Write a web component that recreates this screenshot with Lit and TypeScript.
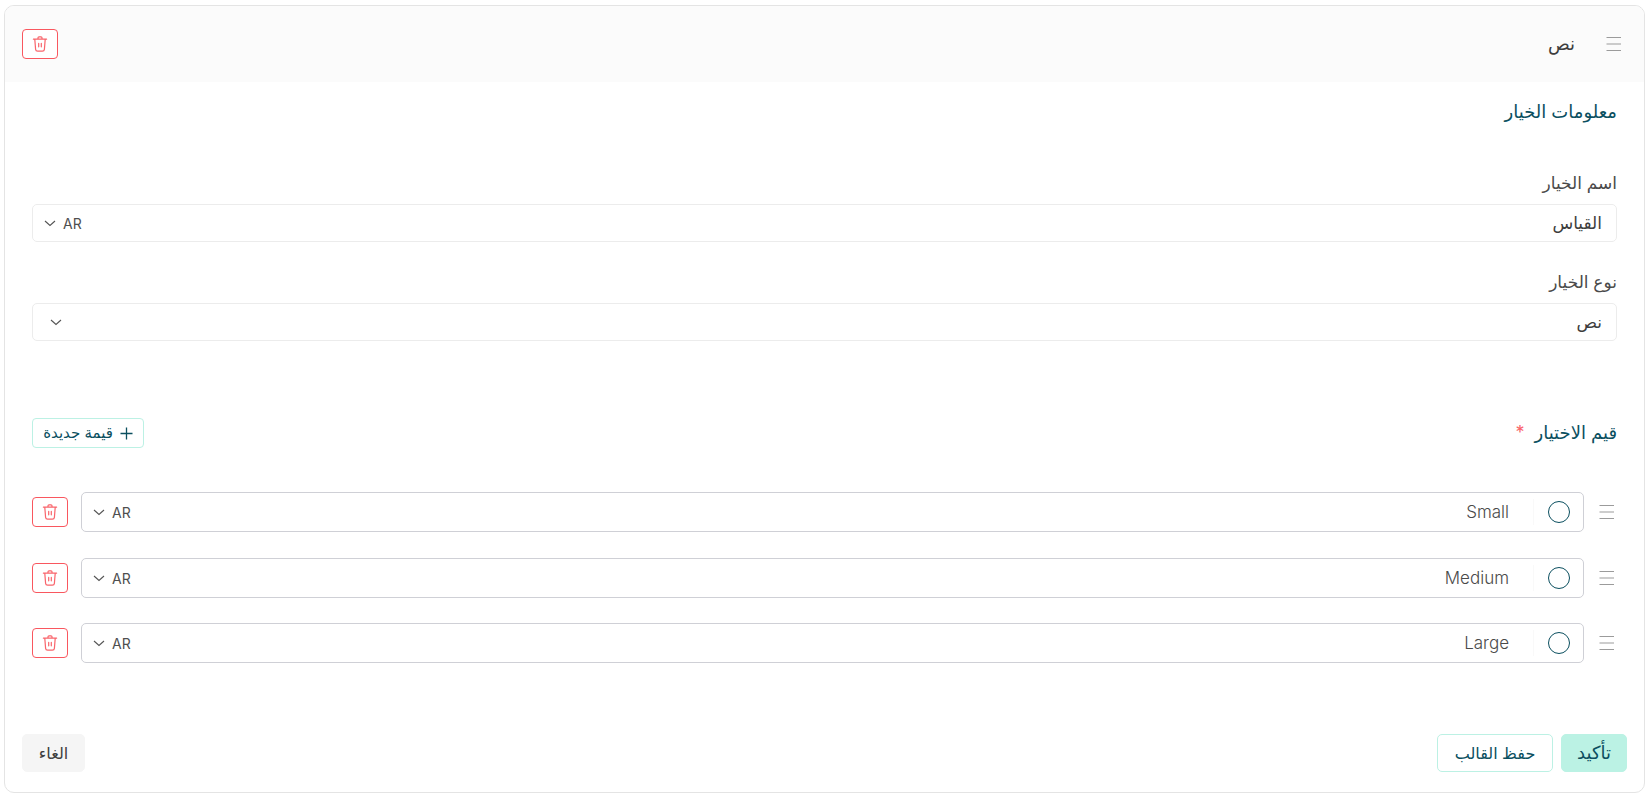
import { LitElement, html, css, svg } from 'lit';
import { customElement } from 'lit/decorators.js';

const trash = svg`<path d="M3.4 5.2h13.2M8 5V3.8c0-.6.4-1 1-1h2c.6 0 1 .4 1 1V5M4.8 5.4l.8 10c.1 1.1.9 1.8 2 1.8h4.8c1.1 0 1.9-.7 2-1.8l.8-10M8.7 9.4v3.4M11.3 9.4v3.4" />`;
const menu = svg`<path d="M.5 1.5h14.5M.5 8h14.5M.5 14.5h14.5" />`;

@customElement('app-root')
export class AppRoot extends LitElement {
  static styles = css`
    :host {
      display: block;
      height: 798px;
      padding: 5px 6px 5px 4px;
      box-sizing: border-box;
      background: #fff;
      font-family: 'Inter', 'DejaVu Sans', sans-serif;
      color: #3d3d3d;
    }
    * {
      box-sizing: border-box;
    }
    .card {
      height: 788px;
      border: 1px solid #e4e4e4;
      border-radius: 10px;
      overflow: hidden;
      display: flex;
      flex-direction: column;
    }
    .head {
      height: 76px;
      flex: none;
      background: #fbfbfb;
      display: flex;
      align-items: center;
      justify-content: space-between;
      padding: 0 22px 0 17px;
      font-size: 18px;
    }
    .head-start {
      display: flex;
      align-items: center;
      gap: 31px;
    }
    .head-text {
      margin-top: -2px;
    }
    .menu {
      width: 16px;
      height: 16px;
      flex: none;
      fill: none;
      stroke: #9b9b9b;
      stroke-width: 1.1;
    }
    .del {
      width: 36px;
      height: 30px;
      flex: none;
      border: 1px solid #f9575f;
      border-radius: 4px;
      background: #fff;
      display: flex;
      align-items: center;
      justify-content: center;
      padding: 0;
    }
    .del svg {
      width: 20px;
      height: 20px;
      fill: none;
      stroke: #f9646b;
      stroke-width: 1.2;
      stroke-linecap: round;
      stroke-linejoin: round;
    }
    .body {
      flex: 1;
      padding: 0 27px;
    }
    h2 {
      margin: 0;
      font-size: 18px;
      font-weight: 400;
      line-height: 24px;
      color: #0b4f5f;
    }
    .info-title {
      padding-top: 18px;
      margin-bottom: 48px;
    }
    .label {
      font-size: 17px;
      line-height: 22px;
      color: #4a4a4a;
      margin-bottom: 10px;
    }
    .field {
      height: 38px;
      line-height: 22px;
      border: 1px solid #ececec;
      border-radius: 5px;
      display: flex;
      align-items: center;
      justify-content: space-between;
      padding: 0 14px 0 11px;
      font-size: 17px;
      margin-bottom: 29px;
    }
    .lang {
      display: flex;
      align-items: center;
      gap: 7px;
      font-size: 14px;
      color: #4f4f4f;
    }
    .lang-text {
      padding-top: 1px;
    }
    .chev {
      width: 12px;
      height: 12px;
      flex: none;
      fill: none;
      stroke: #555;
      stroke-width: 1.1;
    }
    .type-chev {
      margin-left: 6px;
    }
    .values-head {
      display: flex;
      align-items: center;
      justify-content: space-between;
      margin-top: 77px;
      margin-bottom: 44px;
    }
    .values-title {
      display: flex;
      gap: 10px;
    }
    .star {
      color: #f9646b;
      font-size: 18px;
      line-height: 18px;
      margin-top: 3px;
    }
    .add {
      width: 112px;
      height: 30px;
      border: 1px solid #bcf1e4;
      border-radius: 4px;
      background: #fff;
      color: #0b4f5f;
      font: inherit;
      font-size: 15px;
      line-height: 20px;
      display: flex;
      align-items: center;
      justify-content: center;
      gap: 7px;
      padding: 0;
    }
    .add svg {
      width: 13px;
      height: 13px;
      flex: none;
      fill: none;
      stroke: #0b4f5f;
      stroke-width: 1.3;
    }
    .rows {
      display: flex;
      flex-direction: column;
      gap: 25.5px;
    }
    .row {
      display: flex;
      align-items: center;
      gap: 13px;
      padding-right: 2px;
    }
    .row .menu {
      margin-left: 2px;
    }
    .box {
      flex: 1;
      height: 40px;
      border: 1px solid #cfd0d6;
      border-radius: 5px;
      display: flex;
      align-items: center;
      padding: 0 13px 0 11px;
      font-size: 17px;
      color: #4a4a4a;
    }
    .dot {
      width: 22px;
      height: 22px;
      border: 1px solid #0b4f5f;
      border-radius: 50%;
      flex: none;
    }
    .sep {
      width: 1px;
      height: 26px;
      background: #f9f9f9;
      margin: 0 14px 0 24px;
    }
    .name {
      flex: 1;
      font-weight: 300;
    }
    .foot {
      flex: none;
      display: flex;
      justify-content: space-between;
      padding: 0 17px 20px;
    }
    .foot-start {
      display: flex;
      gap: 8px;
    }
    .btn {
      height: 38px;
      border: 1px solid transparent;
      border-radius: 5px;
      font: inherit;
      font-size: 16px;
      line-height: 22px;
      padding: 0;
      color: #0b4f5f;
      background: #fff;
    }
    .ok {
      width: 66px;
      font-size: 18px;
      background: #bbf2e4;
      border-color: #bbf2e4;
    }
    .tpl {
      width: 116px;
      border-color: #bcf1e4;
    }
    .cancel {
      width: 63px;
      background: #f5f5f5;
      border-color: #f5f5f5;
      color: #3d3d3d;
    }
  `;

  private menuIcon() {
    return html`<svg class="menu" viewBox="0 0 16 16">${menu}</svg>`;
  }

  private chevron(cls = '') {
    return html`<svg class="chev ${cls}" viewBox="0 0 12 12"><path d="M1 4l5 4.5L11 4" /></svg>`;
  }

  private delBtn() {
    return html`<button class="del"><svg viewBox="0 0 20 20">${trash}</svg></button>`;
  }

  private row(name: string) {
    return html`
      <div class="row">
        ${this.menuIcon()}
        <div class="box">
          <span class="dot"></span>
          <span class="sep"></span>
          <span class="name">${name}</span>
          <span class="lang"><span class="lang-text">AR</span>${this.chevron()}</span>
        </div>
        ${this.delBtn()}
      </div>
    `;
  }

  render() {
    return html`
      <div class="card" dir="rtl">
        <div class="head">
          <div class="head-start">${this.menuIcon()}<span class="head-text">نص</span></div>
          ${this.delBtn()}
        </div>
        <div class="body">
          <h2 class="info-title">معلومات الخيار</h2>
          <div class="label">اسم الخيار</div>
          <div class="field">
            <span>القياس</span>
            <span class="lang"><span class="lang-text">AR</span>${this.chevron()}</span>
          </div>
          <div class="label">نوع الخيار</div>
          <div class="field">
            <span>نص</span>
            ${this.chevron('type-chev')}
          </div>
          <div class="values-head">
            <h2 class="values-title"><span>قيم الاختيار</span><span class="star">*</span></h2>
            <button class="add">
              <svg viewBox="0 0 13 13"><path d="M6.5 0.5v12M0.5 6.5h12" /></svg>
              <span>قيمة جديدة</span>
            </button>
          </div>
          <div class="rows">${['Small', 'Medium', 'Large'].map((n) => this.row(n))}</div>
        </div>
        <div class="foot">
          <div class="foot-start">
            <button class="btn ok">تأكيد</button>
            <button class="btn tpl">حفظ القالب</button>
          </div>
          <button class="btn cancel">الغاء</button>
        </div>
      </div>
    `;
  }
}
